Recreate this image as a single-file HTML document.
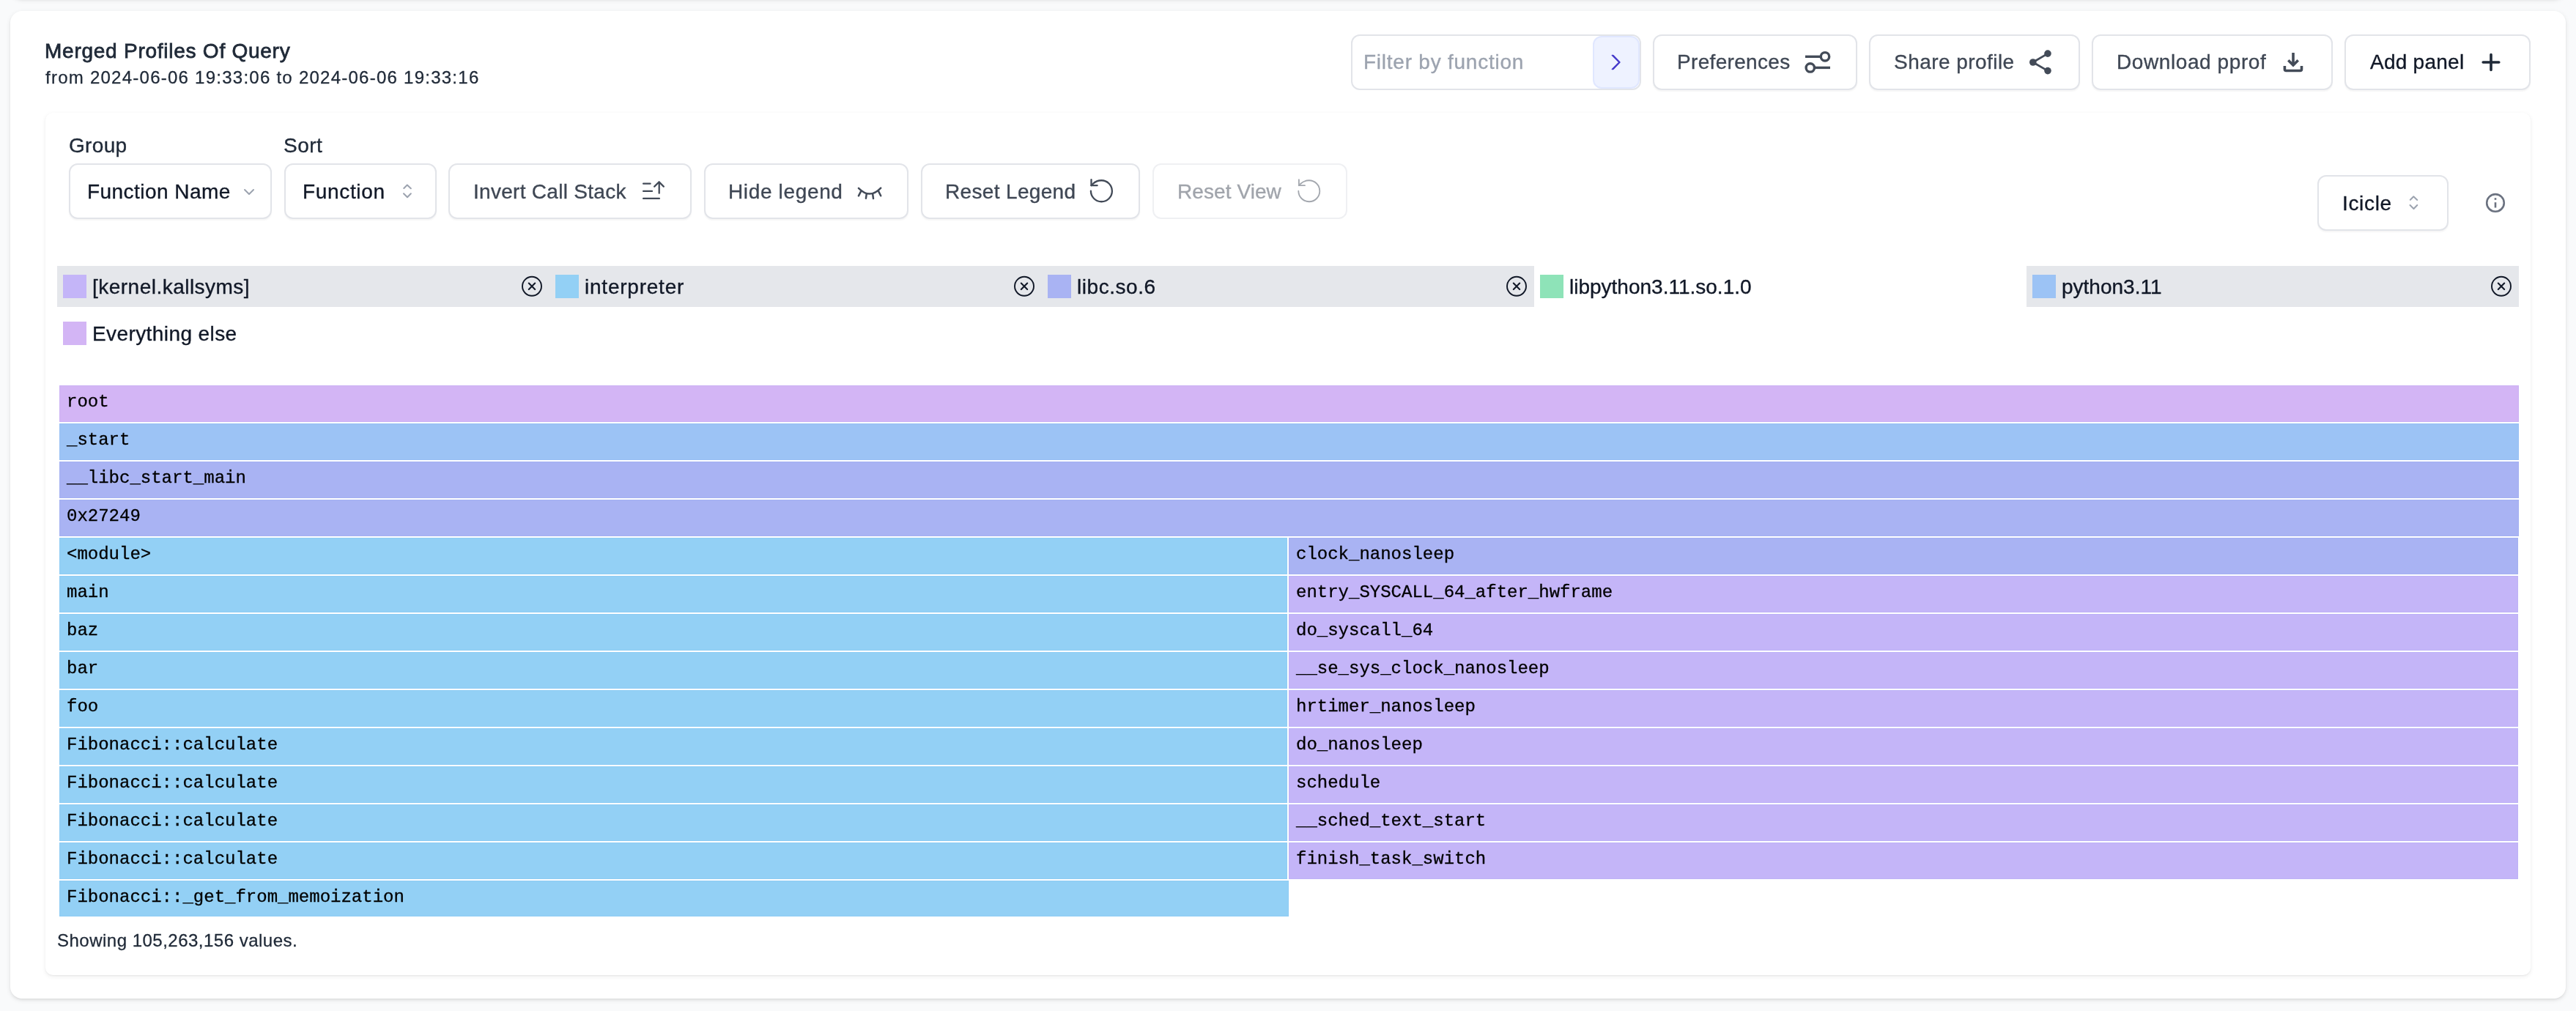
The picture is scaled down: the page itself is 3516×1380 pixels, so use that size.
<!DOCTYPE html>
<html><head><meta charset="utf-8">
<style>
html,body{margin:0;padding:0;}
body{-webkit-font-smoothing:antialiased;width:3516px;height:1380px;overflow:hidden;background:#f9fafb;position:relative;font-family:"Liberation Sans",sans-serif;color:#111827;}
.a{position:absolute;white-space:nowrap;line-height:normal;will-change:transform;}
.prev{position:absolute;left:14px;top:-60px;width:3488px;height:58px;background:#fff;border-radius:16px;box-shadow:0 2px 6px 0 rgba(0,0,0,.1),0 2px 4px -2px rgba(0,0,0,.1);}
.card{position:absolute;left:14px;top:15px;width:3488px;height:1348px;background:#fff;border-radius:16px;box-shadow:0 2px 6px 0 rgba(0,0,0,.1),0 2px 4px -2px rgba(0,0,0,.1);}
.inner{position:absolute;left:62px;top:154px;width:3392px;height:1177px;background:#fff;border-radius:10px;box-shadow:0 2px 6px 0 rgba(0,0,0,.07),0 1px 2px 0 rgba(0,0,0,.05);}
.btn{position:absolute;box-sizing:border-box;border:2px solid #e2e4e9;border-radius:12px;background:#fff;box-shadow:0 2px 2px 0 rgba(0,0,0,.04);}
.t28{font-size:28px;}
.t24{font-size:24px;}
.g7{color:#3f4754;}
.t28,.lg .tx{-webkit-text-stroke:0.35px currentColor;}
.t24{-webkit-text-stroke:0.3px currentColor;}
.fl{will-change:transform;position:absolute;height:50px;box-shadow:inset 0 0 0 1px rgba(40,120,230,0.045);}
.fl span{position:absolute;left:10px;top:9px;font-family:"Liberation Mono",monospace;font-size:24px;color:#000;-webkit-text-stroke:0.3px #000;white-space:nowrap;line-height:normal;}
.lg{will-change:transform;position:absolute;top:363px;height:56px;width:672px;}
.lg.on{background:#e5e7eb;}
.sw{position:absolute;left:8px;top:12px;width:32px;height:32px;}
.lg .tx{position:absolute;left:48px;top:13px;font-size:28px;color:#111827;white-space:nowrap;line-height:normal;}
.xc{position:absolute;left:634px;top:14px;}
</style></head>
<body>
<div class="prev"></div>
<div class="card"></div>

<div class="a t28" style="left:61px;top:54px;color:#1f2937;letter-spacing:0.75px;-webkit-text-stroke:0.8px #1f2937;">Merged Profiles Of Query</div>
<div class="a t24" style="left:62px;top:92px;color:#1f2937;letter-spacing:1.25px;">from 2024-06-06 19:33:06 to 2024-06-06 19:33:16</div>

<!-- top toolbar -->
<div class="btn" style="left:1844px;top:47px;width:396px;height:76px;box-shadow:none;"></div>
<div class="a t28" style="left:1861px;top:69px;color:#9ca3af;letter-spacing:0.76px;">Filter by function</div>
<div class="btn" style="left:2174px;top:49px;width:64px;height:72px;background:#eef2ff;border-color:#e0e7ff;box-shadow:none;"></div>
<svg class="a" style="left:2196px;top:72px" width="20" height="26" viewBox="0 0 20 26"><path d="M4 3 L14 13 L4 23" fill="none" stroke="#4338ca" stroke-width="1.7"/></svg>

<div class="btn" style="left:2256px;top:47px;width:279px;height:76px;"></div>
<div class="a t28 g7" style="left:2289px;top:69px;letter-spacing:0.32px;">Preferences</div>
<div class="btn" style="left:2551px;top:47px;width:288px;height:76px;"></div>
<div class="a t28 g7" style="left:2585px;top:69px;letter-spacing:0.45px;">Share profile</div>
<div class="btn" style="left:2855px;top:47px;width:329px;height:76px;"></div>
<div class="a t28 g7" style="left:2889px;top:69px;letter-spacing:0.59px;">Download pprof</div>
<div class="btn" style="left:3200px;top:47px;width:254px;height:76px;"></div>
<div class="a t28" style="left:3235px;top:69px;color:#111827;letter-spacing:0.25px;">Add panel</div>

<div class="inner"></div>
<div class="a t28" style="left:94px;top:183px;color:#1f2937;letter-spacing:0.33px;">Group</div>
<div class="a t28" style="left:387px;top:183px;color:#1f2937;letter-spacing:0.47px;">Sort</div>

<div class="btn" style="left:94px;top:223px;width:277px;height:76px;"></div>
<div class="a t28" style="left:119px;top:246px;letter-spacing:0.45px;">Function Name</div>
<div class="btn" style="left:388px;top:223px;width:208px;height:76px;"></div>
<div class="a t28" style="left:413px;top:246px;letter-spacing:0.66px;">Function</div>
<div class="btn" style="left:612px;top:223px;width:332px;height:76px;"></div>
<div class="a t28 g7" style="left:646px;top:246px;letter-spacing:0.29px;">Invert Call Stack</div>
<div class="btn" style="left:961px;top:223px;width:279px;height:76px;"></div>
<div class="a t28 g7" style="left:994px;top:246px;letter-spacing:0.65px;">Hide legend</div>
<div class="btn" style="left:1257px;top:223px;width:299px;height:76px;"></div>
<div class="a t28 g7" style="left:1290px;top:246px;letter-spacing:0.34px;">Reset Legend</div>
<div class="btn" style="left:1573px;top:223px;width:266px;height:76px;box-shadow:none;border-color:#eff0f3;"></div>
<div class="a t28" style="left:1607px;top:246px;color:#a0a4ab;letter-spacing:0.08px;">Reset View</div>

<div class="btn" style="left:3163px;top:239px;width:179px;height:76px;"></div>
<div class="a t28" style="left:3197px;top:262px;letter-spacing:0.66px;">Icicle</div>

<!-- legend -->
<div class="lg on" style="left:78px;"><div class="sw" style="background:#c4b5f8"></div><div class="tx" style="letter-spacing:0.48px">[kernel.kallsyms]</div></div>
<div class="lg on" style="left:750px;"><div class="sw" style="background:#93d0f5"></div><div class="tx" style="letter-spacing:0.77px">interpreter</div></div>
<div class="lg on" style="left:1422px;"><div class="sw" style="background:#a9b3f3"></div><div class="tx" style="letter-spacing:0.55px">libc.so.6</div></div>
<div class="lg" style="left:2094px;"><div class="sw" style="background:#8ee3b8"></div><div class="tx">libpython3.11.so.1.0</div></div>
<div class="lg on" style="left:2766px;"><div class="sw" style="background:#9cc3f5"></div><div class="tx">python3.11</div></div>
<div class="lg" style="left:78px;top:427px;"><div class="sw" style="background:#d3b5f5"></div><div class="tx" style="letter-spacing:0.41px">Everything else</div></div>

<!-- flame graph -->
<div class="fl" style="left:81px;top:526px;width:3357px;background:#d3b5f5"><span>root</span></div>
<div class="fl" style="left:81px;top:578px;width:3357px;background:#9cc3f5"><span>_start</span></div>
<div class="fl" style="left:81px;top:630px;width:3357px;background:#a9b3f3"><span>__libc_start_main</span></div>
<div class="fl" style="left:81px;top:682px;width:3357px;background:#a9b3f3"><span>0x27249</span></div>
<div class="fl" style="left:81px;top:734px;width:1676px;background:#93d0f5"><span>&lt;module&gt;</span></div>
<div class="fl" style="left:81px;top:786px;width:1676px;background:#93d0f5"><span>main</span></div>
<div class="fl" style="left:81px;top:838px;width:1676px;background:#93d0f5"><span>baz</span></div>
<div class="fl" style="left:81px;top:890px;width:1676px;background:#93d0f5"><span>bar</span></div>
<div class="fl" style="left:81px;top:942px;width:1676px;background:#93d0f5"><span>foo</span></div>
<div class="fl" style="left:81px;top:994px;width:1676px;background:#93d0f5"><span>Fibonacci::calculate</span></div>
<div class="fl" style="left:81px;top:1046px;width:1676px;background:#93d0f5"><span>Fibonacci::calculate</span></div>
<div class="fl" style="left:81px;top:1098px;width:1676px;background:#93d0f5"><span>Fibonacci::calculate</span></div>
<div class="fl" style="left:81px;top:1150px;width:1676px;background:#93d0f5"><span>Fibonacci::calculate</span></div>
<div class="fl" style="left:81px;top:1202px;width:1678px;height:49px;background:#93d0f5"><span>Fibonacci::_get_from_memoization</span></div>
<div class="fl" style="left:1759px;top:734px;width:1678px;background:#a9b3f3"><span>clock_nanosleep</span></div>
<div class="fl" style="left:1759px;top:786px;width:1678px;background:#c4b5f8"><span>entry_SYSCALL_64_after_hwframe</span></div>
<div class="fl" style="left:1759px;top:838px;width:1678px;background:#c4b5f8"><span>do_syscall_64</span></div>
<div class="fl" style="left:1759px;top:890px;width:1678px;background:#c4b5f8"><span>__se_sys_clock_nanosleep</span></div>
<div class="fl" style="left:1759px;top:942px;width:1678px;background:#c4b5f8"><span>hrtimer_nanosleep</span></div>
<div class="fl" style="left:1759px;top:994px;width:1678px;background:#c4b5f8"><span>do_nanosleep</span></div>
<div class="fl" style="left:1759px;top:1046px;width:1678px;background:#c4b5f8"><span>schedule</span></div>
<div class="fl" style="left:1759px;top:1098px;width:1678px;background:#c4b5f8"><span>__sched_text_start</span></div>
<div class="fl" style="left:1759px;top:1150px;width:1678px;background:#c4b5f8"><span>finish_task_switch</span></div>

<div class="a t24" style="left:78px;top:1270px;color:#1f2937;letter-spacing:0.49px;">Showing 105,263,156 values.</div>

<svg class="a" style="left:0;top:0" width="3516" height="1380" viewBox="0 0 3516 1380" fill="none" stroke-linecap="round" stroke-linejoin="round">
 <!-- filter chevron -->
 <path d="M2201.8 75.7 L2210.9 85 L2201.8 94.3" stroke="#4338ca" stroke-width="1.7"/>
 <!-- preferences sliders -->
 <g stroke="#434b58" stroke-width="3.4">
  <path d="M2464 77.3 H2485.3" stroke-linecap="butt"/><circle cx="2491" cy="77.3" r="5.7"/>
  <circle cx="2470.8" cy="92.4" r="5.7"/><path d="M2476.5 92.4 H2498" stroke-linecap="butt"/>
 </g>
 <!-- share -->
 <g fill="#434b58"><circle cx="2795" cy="73.1" r="4.8"/><circle cx="2774.8" cy="85" r="4.8"/><circle cx="2795" cy="96.6" r="4.8"/></g>
 <path d="M2795 73.1 L2774.8 85 L2795 96.6" stroke="#434b58" stroke-width="2.8"/>
 <!-- download -->
 <g stroke="#434b58" stroke-width="3.6" stroke-linecap="butt" stroke-linejoin="miter">
  <path d="M3130 72 V89"/><path d="M3123.3 82.3 L3130 89 L3136.7 82.3"/>
  <path d="M3118.4 90 V94.5 Q3118.4 96.5 3120.4 96.5 H3139.5 Q3141.5 96.5 3141.5 94.5 V90"/>
 </g>
 <!-- plus -->
 <path d="M3400 74.5 V95.5 M3389.2 85 H3410.8" stroke="#1f2937" stroke-width="3.6"/>
 <!-- group chevron -->
 <path d="M334 259 L340 265 L346 259" stroke="#9ca3af" stroke-width="2"/>
 <!-- sort chevrons -->
 <path d="M551.3 257 L555.8 252.5 L560.8 257.2 M551 264.3 L556 269.3 L560.8 264.3" stroke="#9ca3af" stroke-width="2"/>
 <!-- icicle chevrons -->
 <path d="M3289.8 272.7 L3294.3 268.2 L3299.3 272.9 M3289.5 280 L3294.5 285 L3299.3 280" stroke="#9ca3af" stroke-width="2"/>
 <!-- invert call stack -->
 <path d="M878.1 250.7 H887.6 M878.1 260.9 H890 M878.1 270.9 H899.9 M899.7 263.7 V248.5 M893.2 254.6 L899.6 248.3 L905.8 254.6" stroke="#434b58" stroke-width="2.3"/>
 <!-- closed eye -->
 <g stroke="#434b58" stroke-width="2.5">
  <path d="M1171.9 256.8 C1177 262 1182 264.6 1187 264.6 C1192 264.6 1197 262 1202.2 256.6"/>
  <path d="M1175 261.4 L1171.9 267.3 M1182.8 264.5 L1181.9 270.8 M1191.1 264.5 L1192 271 M1199 260.9 L1202.2 267.3"/>
 </g>
 <!-- reset legend -->
 <g stroke="#434b58" stroke-width="2.3">
  <path d="M1488.9 260.75 A14.5 14.5 0 1 0 1503.4 246.25 C1499 246.25 1494.8 248 1491.6 251 L1489.5 253.2"/>
  <path d="M1489.5 245.2 V253.2 H1497.6"/>
 </g>
 <g stroke="#a3a7ae" stroke-width="1.8">
  <path d="M1772.3 260.75 A14.5 14.5 0 1 0 1786.8 246.25 C1782.4 246.25 1778.2 248 1775 251 L1772.9 253.2"/>
  <path d="M1772.9 245.2 V253.2 H1781"/>
 </g>
 <!-- info -->
 <g stroke="#6b7280" stroke-width="2.6"><circle cx="3406" cy="276.9" r="11.8"/><path d="M3406 276.2 V283.5" stroke-linecap="butt"/><path d="M3406 270.2 V272.8" stroke-linecap="butt"/></g>
 <!-- legend x circles -->
 <g stroke="#111827" stroke-width="1.9">
  <circle cx="726" cy="390.8" r="13"/><path d="M721.8 386.6 L730.2 395 M730.2 386.6 L721.8 395" stroke-width="2.1"/>
  <circle cx="1398" cy="390.8" r="13"/><path d="M1393.8 386.6 L1402.2 395 M1402.2 386.6 L1393.8 395" stroke-width="2.1"/>
  <circle cx="2070" cy="390.8" r="13"/><path d="M2065.8 386.6 L2074.2 395 M2074.2 386.6 L2065.8 395" stroke-width="2.1"/>
  <circle cx="3414" cy="390.8" r="13"/><path d="M3409.8 386.6 L3418.2 395 M3418.2 386.6 L3409.8 395" stroke-width="2.1"/>
 </g>
</svg>
</body></html>
